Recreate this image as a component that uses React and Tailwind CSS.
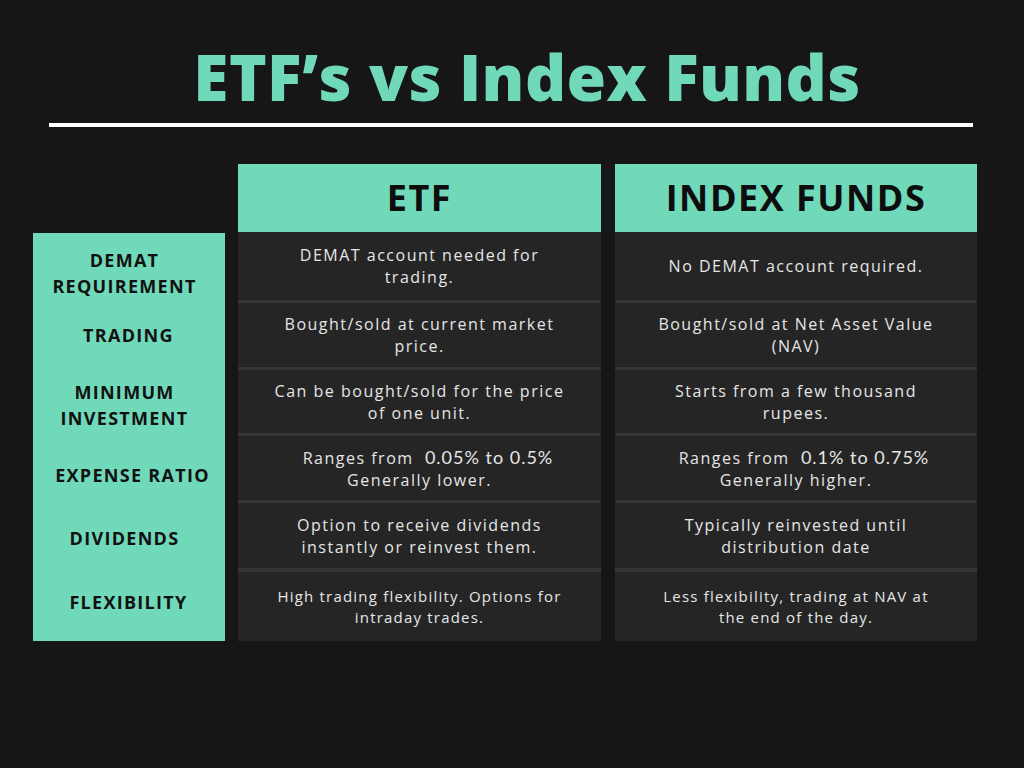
const rows = [
  {
    label: ["DEMAT", "REQUIREMENT"],
    etf: ["DEMAT account needed for", "trading."],
    index: ["No DEMAT account required."],
    h: 68,
    lh: "h-[80px] pr-[9px]",
  },
  {
    label: ["TRADING"],
    etf: ["Bought/sold at current market", "price."],
    index: ["Bought/sold at Net Asset Value", "(NAV)"],
    h: 64,
    lh: "h-[44px] pr-[1px]",
  },
  {
    label: ["MINIMUM", "INVESTMENT"],
    etf: ["Can be bought/sold for the price", "of one unit."],
    index: ["Starts from a few thousand", "rupees."],
    h: 63,
    lh: "h-[95px] pr-[9px]",
  },
  {
    label: ["EXPENSE RATIO"],
    etf: "expense-etf",
    index: "expense-index",
    h: 64,
    lh: "h-[45px] pl-[7px]",
  },
  {
    label: ["DIVIDENDS"],
    etf: ["Option to receive dividends", "instantly or reinvest them."],
    index: ["Typically reinvested until", "distribution date"],
    h: 65,
    lh: "h-[82px] pr-[9px]",
  },
  {
    label: ["FLEXIBILITY"],
    etf: ["High trading flexibility. Options for", "intraday trades."],
    index: ["Less flexibility, trading at NAV at", "the end of the day."],
    h: 69,
    lh: "h-[45px] pr-[1px]",
    small: true,
  },
];

function Num({ children }) {
  return <span className="font-['Lato'] text-[18px] tracking-[1px]">{children}</span>;
}

function CellText({ value }) {
  if (value === "expense-etf") {
    return (
      <>
        <p className="pl-[17px]">Ranges from&nbsp; <Num>0.05% to 0.5%</Num></p>
        <p>Generally lower.</p>
      </>
    );
  }
  if (value === "expense-index") {
    return (
      <>
        <p className="pl-[16px]">Ranges from&nbsp; <Num>0.1% to 0.75%</Num></p>
        <p>Generally higher.</p>
      </>
    );
  }
  return value.map((line) => <p key={line}>{line}</p>);
}

function Column({ title, field }) {
  return (
    <div className="flex flex-col">
      <div className="h-[68px] bg-[#70d9b9] flex items-center justify-center">
        <span className="text-[36px] font-bold text-[#0d0d0d] tracking-[1.5px]">{title}</span>
      </div>
      {rows.map((r, i) => (
        <div key={i}>
          {i > 0 && <div className={i === 5 ? "h-[4px] bg-[#353535]" : "h-[3px] bg-[#353535]"} />}
          <div
            className={`bg-[#252525] flex flex-col items-center justify-center text-center text-[#e6e6e6] ${
              r.small ? "text-[15px] leading-[21px] tracking-[1.2px]" : "text-[16px] leading-[22px] tracking-[1.5px]"
            }`}
            style={{ height: r.h }}
          >
            <CellText value={r[field]} />
          </div>
        </div>
      ))}
    </div>
  );
}

export default function App() {
  return (
    <div className="w-[1024px] h-[768px] bg-[#161616] font-['Open_Sans',sans-serif] overflow-hidden">
      <h1 className="pt-[45px] pl-[30px] text-center text-[64px] leading-[64px] font-extrabold tracking-[0.4px] text-[#70d9b9]">
        ETF’s vs Index Funds
      </h1>
      <div className="mt-[14px] ml-[49px] w-[924px] h-[4px] bg-white" />

      <div className="mt-[37px] ml-[33px] flex">
        <div className="w-[192px] flex flex-col">
          <div className="h-[69px]" />
          <div className="bg-[#70d9b9] h-[408px] flex flex-col">
            {rows.map((r, i) => (
              <div
                key={i}
                className={`${r.lh} flex flex-col items-center justify-center text-center text-[18px] leading-[26px] font-bold text-[#111] tracking-[1.3px]`}
              >
                {r.label.map((l) => (
                  <span key={l}>{l}</span>
                ))}
              </div>
            ))}
          </div>
        </div>
        <div className="ml-[13px] w-[363px]">
          <Column title="ETF" field="etf" />
        </div>
        <div className="ml-[14px] w-[362px]">
          <Column title="INDEX FUNDS" field="index" />
        </div>
      </div>
    </div>
  );
}
